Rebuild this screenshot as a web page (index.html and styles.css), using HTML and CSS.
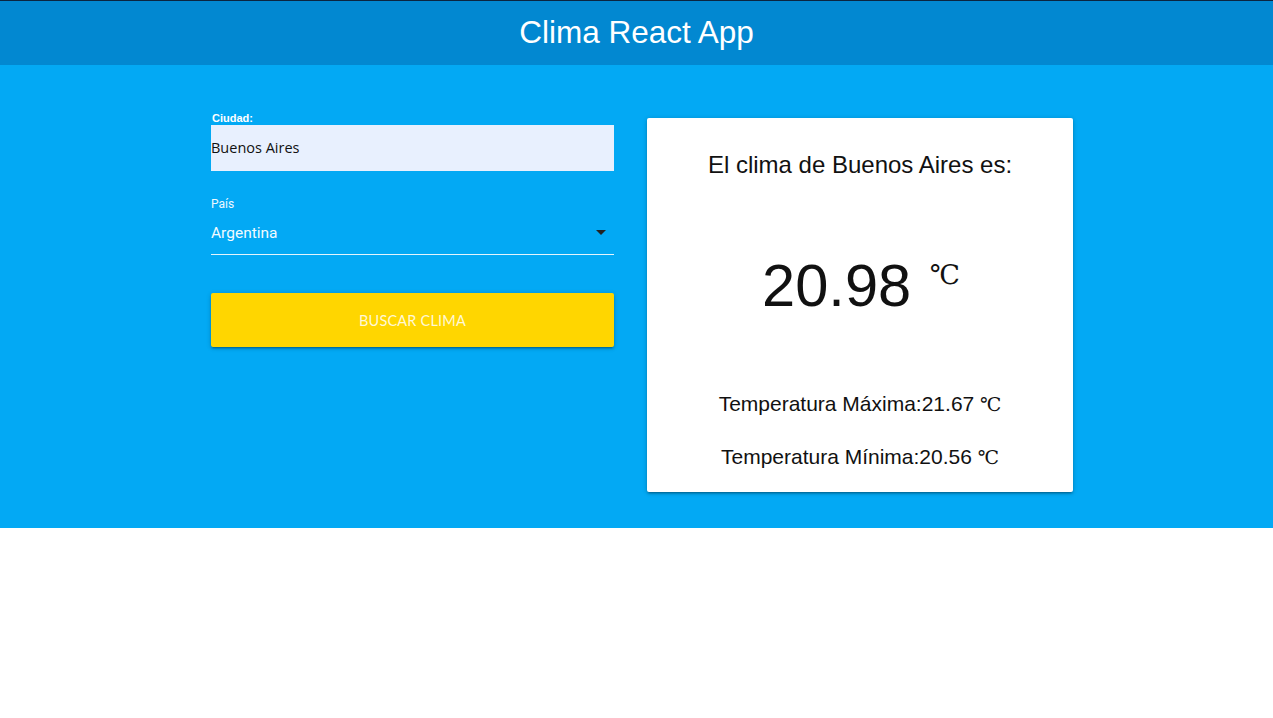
FILE: index.html
```html
<!DOCTYPE html>
<html lang="es">
<head>
<meta charset="utf-8">
<title>Clima React App</title>
<link rel="stylesheet" href="styles.css">
</head>
<body>
<nav class="nav">
  <span class="brand">Clima React App</span>
</nav>
<main class="hero">
  <div class="container">
    <form class="form">
      <label class="city-label" for="ciudad">Ciudad:</label>
      <div class="city-input" id="ciudad">Buenos Aires</div>
      <div class="select-field">
        <span class="select-label">País</span>
        <div class="select">
          <span class="select-value">Argentina</span>
          <svg class="caret" width="10" height="6" viewBox="0 0 10 6"><path d="M0 0 L10 0 L5 5 Z" fill="#222"/></svg>
        </div>
      </div>
      <button type="button" class="btn">BUSCAR CLIMA</button>
    </form>
    <section class="card">
      <h2 class="card-title">El clima de Buenos Aires es:</h2>
      <p class="temp">20.98 <span class="deg-big">℃</span></p>
      <p class="minmax">Temperatura Máxima:21.67 <span class="deg">℃</span></p>
      <p class="minmax">Temperatura Mínima:20.56 <span class="deg">℃</span></p>
    </section>
  </div>
</main>
</body>
</html>
```
FILE: styles.css
```css
* { box-sizing: border-box; }
html, body { margin: 0; padding: 0; background: #fff; }
body { font-family: "Liberation Sans", Arial, sans-serif; }

.nav {
  height: 65px;
  border-top: 1px solid #0b2540;
  background: #0288d1;
  display: flex;
  align-items: center;
  justify-content: center;
}
.brand {
  color: #fff;
  font-size: 31.5px;
  line-height: 1;
  margin-top: -1px;
}

.hero {
  background: #03a9f4;
  height: 463px;
  padding-top: 53px;
}
.container {
  width: 862px;
  margin-left: 211px;
  display: flex;
  align-items: flex-start;
  gap: 33px;
}

.form {
  width: 403px;
  display: flex;
  flex-direction: column;
}
.city-label {
  color: #fff;
  font-family: "Liberation Sans", Arial, sans-serif;
  font-weight: bold;
  font-size: 11px;
  line-height: 12px;
  margin-top: -6px;
  height: 13px;
  padding-left: 1px;
}
.city-input {
  height: 46px;
  background: #e8f0fe;
  color: #111;
  font-family: "Open Sans", sans-serif;
  font-size: 14.5px;
  line-height: 46px;
}

.select-field {
  margin-top: 27px;
  display: flex;
  flex-direction: column;
}
.select-label {
  color: #eef8ff;
  font-family: Roboto, sans-serif;
  font-size: 12px;
  line-height: 12px;
}
.select {
  height: 45px;
  border-bottom: 1px solid #e3f4fd;
  display: flex;
  align-items: center;
  justify-content: space-between;
  padding-right: 8px;
  padding-top: 2px;
}
.select-value {
  color: #f2fbff;
  font-family: Roboto, sans-serif;
  font-size: 15.5px;
}
.caret { display: block; }

.btn {
  margin-top: 38px;
  height: 54px;
  border: none;
  border-radius: 2px;
  background: #ffd600;
  color: #fff8d6;
  font-family: Lato, sans-serif;
  font-size: 14.5px;
  letter-spacing: 0.2px;
  box-shadow: 0 2px 2px 0 rgba(0,0,0,0.14), 0 3px 1px -2px rgba(0,0,0,0.12), 0 1px 5px 0 rgba(0,0,0,0.2);
  padding: 0;
}

.card {
  width: 426px;
  height: 374px;
  background: #fff;
  border-radius: 2px;
  box-shadow: 0 2px 2px 0 rgba(0,0,0,0.14), 0 3px 1px -2px rgba(0,0,0,0.12), 0 1px 5px 0 rgba(0,0,0,0.2);
  display: flex;
  flex-direction: column;
  align-items: center;
  color: #111;
  padding-top: 32px;
}
.card-title {
  margin: 0;
  font-weight: normal;
  font-size: 24px;
  line-height: 30px;
}
.temp {
  margin: 60px 0 0 0;
  font-size: 59.6px;
  line-height: 70px;
  padding-left: 2px;
}
.deg-big {
  font-family: "Liberation Serif", "DejaVu Serif", serif;
  font-size: 27px;
  vertical-align: 22px;
  margin-left: 2px;
}
.minmax {
  margin: 0;
  font-size: 21px;
  line-height: 28px;
}
.temp + .minmax { margin-top: 69px; }
.minmax + .minmax { margin-top: 24px; }
.deg {
  font-family: "Liberation Serif", "DejaVu Serif", serif;
  font-size: 19px;
}
```
